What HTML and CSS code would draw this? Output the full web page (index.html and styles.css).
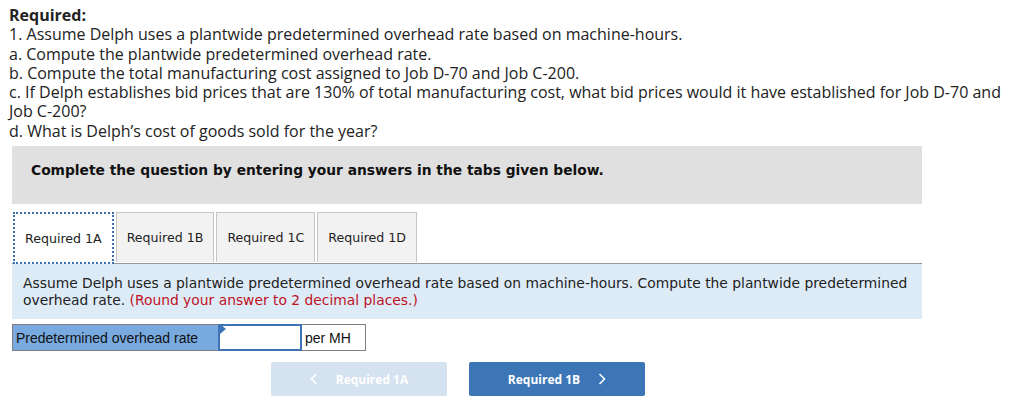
FILE: index.html
```html
<!DOCTYPE html>
<html>
<head>
<meta charset="utf-8">
<link rel="stylesheet" href="styles.css">
</head>
<body>
<div class="question">
  <div class="required">
    <strong>Required:</strong><br>
    1. Assume Delph uses a plantwide predetermined overhead rate based on machine-hours.<br>
    a. Compute the plantwide predetermined overhead rate.<br>
    b. Compute the total manufacturing cost assigned to Job D-70 and Job C-200.<br>
    c. If Delph establishes bid prices that are 130% of total manufacturing cost, what bid prices would it have established for Job D-70 and Job&nbsp;C-200?<br>
    d. What is Delph’s cost of goods sold for the year?
  </div>
</div>
<div class="work">
  <div class="instructions">Complete the question by entering your answers in the tabs given below.</div>
  <div class="tabs">
    <div class="tab active">Required 1A</div>
    <div class="tab">Required 1B</div>
    <div class="tab">Required 1C</div>
    <div class="tab">Required 1D</div>
  </div>
  <div class="panel">
    Assume Delph uses a plantwide predetermined overhead rate based on machine-hours. Compute the plantwide predetermined overhead rate. <span class="hint">(Round your answer to 2 decimal places.)</span>
  </div>
  <div class="answer">
    <div class="cell label">Predetermined overhead rate</div>
    <div class="cell input"><span class="flag"></span></div>
    <div class="cell unit">per MH</div>
  </div>
  <div class="nav">
    <button class="btn prev">
      <svg class="chev" width="8" height="12" viewBox="0 0 8 12"><path d="M6.5 1 L1.5 6 L6.5 11" fill="none" stroke="#fff" stroke-width="1.6"/></svg>
      <span>Required 1A</span>
    </button>
    <button class="btn next">
      <span>Required 1B</span>
      <svg class="chev" width="8" height="12" viewBox="0 0 8 12"><path d="M1.5 1 L6.5 6 L1.5 11" fill="none" stroke="#fff" stroke-width="1.6"/></svg>
    </button>
  </div>
</div>
</body>
</html>
```
FILE: styles.css
```css
html, body {
  margin: 0;
  padding: 0;
  background: #fff;
}
.question {
  padding: 6px 9px 0 9px;
}
.required {
  font-family: "Open Sans", "Liberation Sans", sans-serif;
  font-size: 16px;
  line-height: 19.3px;
  color: #222;
}
.required strong {
  font-weight: 700;
}
.work {
  margin-left: 12px;
  width: 910px;
  font-family: "DejaVu Sans", Verdana, sans-serif;
}
.instructions {
  margin-top: 5px;
  background: #e0e0e0;
  height: 58px;
  box-sizing: border-box;
  padding: 16px 0 0 19px;
  font-size: 13.8px;
  font-weight: bold;
  color: #111;
}
.tabs {
  display: flex;
  gap: 2px;
  margin-top: 8px;
  padding-left: 1px;
}
.tab {
  height: 50px;
  box-sizing: border-box;
  border: 1px solid #c6c6c6;
  border-bottom: none;
  background: #f2f2f2;
  font-size: 12.6px;
  color: #222;
  padding: 0 10px;
  display: flex;
  align-items: center;
}
.tab.active {
  background: #fff;
  border: 2px dotted #3a6fb0;
  height: 52px;
  margin-bottom: -1px;
  position: relative;
  z-index: 1;
}
.panel {
  border-top: 1px solid #999;
  background: #ddebf7;
  padding: 11px 8px 10px 11px;
  font-size: 13.85px;
  line-height: 17px;
  color: #222;
}
.hint {
  color: #c0111f;
}
.answer {
  display: flex;
  margin-top: 5px;
  font-family: "Liberation Sans", Arial, sans-serif;
  font-size: 14px;
}
.cell {
  height: 27px;
  box-sizing: border-box;
  border: 1px solid #7f7f7f;
  display: flex;
  align-items: center;
}
.label {
  width: 206px;
  background: #78aadf;
  color: #111;
  padding-left: 3px;
  border-right: none;
}
.input {
  width: 84px;
  background: #fff;
  border: 2px solid #3e74b5;
  position: relative;
}
.flag {
  position: absolute;
  left: 0;
  top: -2px;
  width: 0;
  height: 0;
  border-top: 5px solid transparent;
  border-bottom: 5px solid transparent;
  border-left: 6px solid #3e74b5;
}
.unit {
  width: 64px;
  padding-left: 3px;
  color: #111;
  border-left: none;
}
.nav {
  display: flex;
  gap: 22px;
  margin-top: 11px;
  padding-left: 259px;
}
.btn {
  width: 176px;
  height: 34px;
  border: none;
  border-radius: 2px;
  color: #fff;
  font-family: "Open Sans", "Liberation Sans", sans-serif;
  font-weight: 700;
  font-size: 12px;
  display: flex;
  align-items: center;
  justify-content: center;
  gap: 18px;
  padding: 0;
}
.prev {
  background: #d5e2f0;
}
.next {
  background: #3c76b6;
}
```
